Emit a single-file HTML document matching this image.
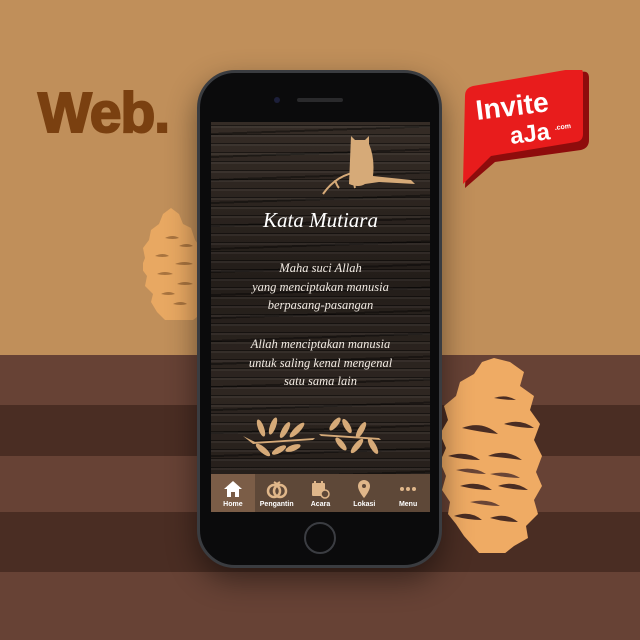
<!DOCTYPE html>
<html><head><meta charset="utf-8"><style>
*{margin:0;padding:0;box-sizing:border-box}
body{width:640px;height:640px;overflow:hidden;position:relative;font-family:"Liberation Sans",sans-serif;
background:linear-gradient(#c08f5a 0 355px,#674235 355px 405px,#4a2d23 405px 456px,#674235 456px 512px,#4a2d23 512px 572px,#674235 572px)}
.abs{position:absolute}
.web{left:38px;top:80px;font-size:57px;font-weight:bold;color:#7a4010;letter-spacing:-1px;-webkit-text-stroke:2px #7a4010}
.phone{left:197px;top:70px;width:245px;height:498px;border-radius:38px;background:#0b0b0c;border:3px solid #3a3c40;box-shadow:0 12px 30px rgba(0,0,0,.45)}
.screen{left:211px;top:122px;width:219px;height:390px;overflow:hidden;
background:
repeating-linear-gradient(180deg,rgba(0,0,0,0) 0 3px,rgba(0,0,0,.45) 3px 4px,rgba(255,255,255,.05) 4px 6px,rgba(0,0,0,0) 6px 9px),
repeating-linear-gradient(178deg,rgba(0,0,0,0) 0 11px,rgba(0,0,0,.4) 11px 13px,rgba(0,0,0,0) 13px 23px),
linear-gradient(180deg,#352c26,#231d19 40%,#2e2621 70%,#221c18)}
.poem{position:absolute;left:0;width:219px;text-align:center;color:#f3ece4;font-family:"Liberation Serif",serif;font-style:italic;font-size:12.5px;line-height:18.5px}
.title{position:absolute;left:0;width:219px;text-align:center;top:86px;color:#fff;font-family:"Liberation Serif",serif;font-style:italic;font-size:21px}
.nav{position:absolute;left:0;top:352px;width:219px;height:38px;background:#5e4838;display:flex}
.nav div{flex:1;text-align:center;color:#fff;font-size:7px;font-weight:bold;padding-top:5px}
.nav div:first-child{background:#7b5d47}
.nav svg{display:block;margin:0 auto 2px;height:20px}
</style></head><body>
<div class="abs web">Web.</div>

<svg class="abs" style="left:143px;top:206px" width="60" height="118" viewBox="0 0 60 118">
<path d="M28 2l8 6 4 10 8 4 4 12 6 8-2 12 4 10-2 12 2 12-4 10 2 10-8 6H22l-8-8-6-10 2-8-8-8 2-10-6-8 4-10-2-10 6-8 2-10 8-6 4-10z" fill="#e8a862"/>
<g fill="#a9743f"><path d="M22 32q8-4 14 0-6 2-14 0z"/><path d="M36 40q8-4 14 0-6 2-14 0z"/><path d="M12 50q8-4 14 0-6 2-14 0z"/><path d="M32 58q10-4 18 0-8 2-18 0z"/><path d="M14 68q8-4 16 0-8 2-16 0z"/><path d="M34 78q8-4 16 0-8 2-16 0z"/><path d="M18 88q8-4 14 0-6 2-14 0z"/><path d="M30 98q8-4 14 0-6 2-14 0z"/></g>
</svg>
<svg class="abs" style="left:440px;top:358px" width="105" height="195" viewBox="0 0 105 195">
<path d="M70 4l14 10-4 14 14 10-4 14 10 14-6 16 8 16-6 16 6 14-8 14 4 14-12 12 2 12-14 8-10 8H40L24 178l-8-12-8-10 2-12-8-12 4-14-6-14 6-14-6-14 8-14-4-14 12-10 4-14 14-8 8-12 12-4z" fill="#efab64"/>
<g fill="#4a2d23"><path d="M22 70q20-8 36 6-18-2-36-6z"/><path d="M64 66q16-6 30 4-14 0-30-4z"/><path d="M8 98q18-6 32 4-16 0-32-4z"/><path d="M48 98q18-8 34 4-16-2-34-4z"/><path d="M20 128q18-6 32 4-16 0-32-4z"/><path d="M58 128q16-6 30 4-14 0-30-4z"/><path d="M14 158q16-6 28 4-14 0-28-4z"/><path d="M50 160q16-6 28 4-14 0-28-4z"/><path d="M54 40q12-4 22 2-12 0-22-2z"/></g>
<g fill="#6a4536"><path d="M16 112q18-4 30 4-14 0-30-4z"/><path d="M50 116q18-4 30 4-14 0-30-4z"/><path d="M30 144q18-4 30 4-14 0-30-4z"/></g>
</svg>

<div class="abs phone"></div>
<div class="abs" style="left:274px;top:97px;width:6px;height:6px;border-radius:50%;background:#1c1f3a"></div>
<div class="abs" style="left:297px;top:98px;width:46px;height:4px;border-radius:2px;background:#2a2a2c"></div>
<div class="abs" style="left:304px;top:522px;width:32px;height:32px;border-radius:50%;border:2px solid #3b3d42"></div>

<div class="abs screen">
<svg class="abs" style="left:110px;top:10px" width="95" height="65" viewBox="0 0 95 65">
<path d="M30 4l4 4h10l4-4 0 8q6 14 4 32l38 4 4 4-36-2-14 2q-6 4-16 0z" fill="#d6aa78"/>
<path d="M2 62q14-20 36-22M14 48q2 6 4 8M36 42q-4 8-2 14" stroke="#d6aa78" stroke-width="2" fill="none"/>
</svg>
<div class="title">Kata Mutiara</div>
<div class="poem" style="top:137px">Maha suci Allah<br>yang menciptakan manusia<br>berpasang-pasangan</div>
<div class="poem" style="top:213px">Allah menciptakan manusia<br>untuk saling kenal mengenal<br>satu sama lain</div>
<svg class="abs" style="left:30px;top:294px" width="150" height="45" viewBox="0 0 150 45">
<g fill="#d6aa78"><path d="M2 20l10 8 60-4 2-2-60 4z"/>
<ellipse cx="20" cy="12" rx="3" ry="9" transform="rotate(-20 20 12)"/><ellipse cx="32" cy="10" rx="3" ry="9" transform="rotate(20 32 10)"/><ellipse cx="44" cy="14" rx="3" ry="9" transform="rotate(30 44 14)"/><ellipse cx="56" cy="14" rx="3" ry="10" transform="rotate(45 56 14)"/><ellipse cx="22" cy="34" rx="3" ry="9" transform="rotate(-50 22 34)"/><ellipse cx="38" cy="34" rx="3" ry="8" transform="rotate(60 38 34)"/><ellipse cx="52" cy="32" rx="3" ry="8" transform="rotate(70 52 32)"/>
<path d="M78 18l60 4 2 2-60-4z"/>
<ellipse cx="94" cy="8" rx="3" ry="8" transform="rotate(40 94 8)"/><ellipse cx="106" cy="10" rx="3" ry="8" transform="rotate(-30 106 10)"/><ellipse cx="120" cy="14" rx="3" ry="9" transform="rotate(30 120 14)"/><ellipse cx="100" cy="28" rx="3" ry="8" transform="rotate(-40 100 28)"/><ellipse cx="116" cy="30" rx="3" ry="9" transform="rotate(40 116 30)"/><ellipse cx="132" cy="30" rx="3" ry="9" transform="rotate(-30 132 30)"/></g>
</svg>
<div class="nav">
<div><svg viewBox="0 0 20 20" width="20"><path d="M10 2L1 10h3v8h4v-5h4v5h4v-8h3z" fill="#fff"/></svg>Home</div>
<div><svg viewBox="0 0 24 20" width="24"><circle cx="9" cy="12" r="6" fill="none" stroke="#e0b78a" stroke-width="2.5"/><circle cx="15" cy="12" r="6" fill="none" stroke="#e0b78a" stroke-width="2.5"/><path d="M9 3l3 2 3-2" stroke="#e0b78a" stroke-width="2" fill="none"/></svg>Pengantin</div>
<div><svg viewBox="0 0 20 20" width="20"><rect x="2" y="4" width="13" height="13" rx="1" fill="#e0b78a"/><path d="M5 2v4M12 2v4" stroke="#e0b78a" stroke-width="2"/><circle cx="15" cy="15" r="4" fill="#5e4838" stroke="#e0b78a" stroke-width="1.5"/></svg>Acara</div>
<div><svg viewBox="0 0 20 20" width="20"><path d="M10 1a6 6 0 0 0-6 6c0 5 6 12 6 12s6-7 6-12a6 6 0 0 0-6-6z" fill="#e0b78a"/><circle cx="10" cy="7" r="2" fill="#5e4838"/></svg>Lokasi</div>
<div><svg viewBox="0 0 20 20" width="20"><circle cx="4" cy="10" r="2" fill="#e0b78a"/><circle cx="10" cy="10" r="2" fill="#e0b78a"/><circle cx="16" cy="10" r="2" fill="#e0b78a"/></svg>Menu</div>
</div>
</div>

<svg class="abs" style="left:455px;top:70px" width="140" height="125" viewBox="0 0 140 125">
<path d="M14 30q0-8 8-10l104-18q8-2 8 6v62q0 8-8 10L40 92 10 118z" fill="#8e0c0c"/>
<path d="M10 26q0-8 8-10l104-18q6-1 6 6v60q0 7-7 8L36 86 8 114z" fill="#e81c1c"/>
<text x="22" y="50" font-family="Liberation Sans" font-weight="bold" font-size="28" fill="#fff" transform="rotate(-7 22 50)">Invite</text>
<text x="56" y="74" font-family="Liberation Sans" font-weight="bold" font-size="24" fill="#fff" transform="rotate(-7 56 74)">aJa</text>
<text x="100" y="60" font-family="Liberation Sans" font-weight="bold" font-size="7" fill="#fff" transform="rotate(-7 100 60)">.com</text>
</svg>
</body></html>
